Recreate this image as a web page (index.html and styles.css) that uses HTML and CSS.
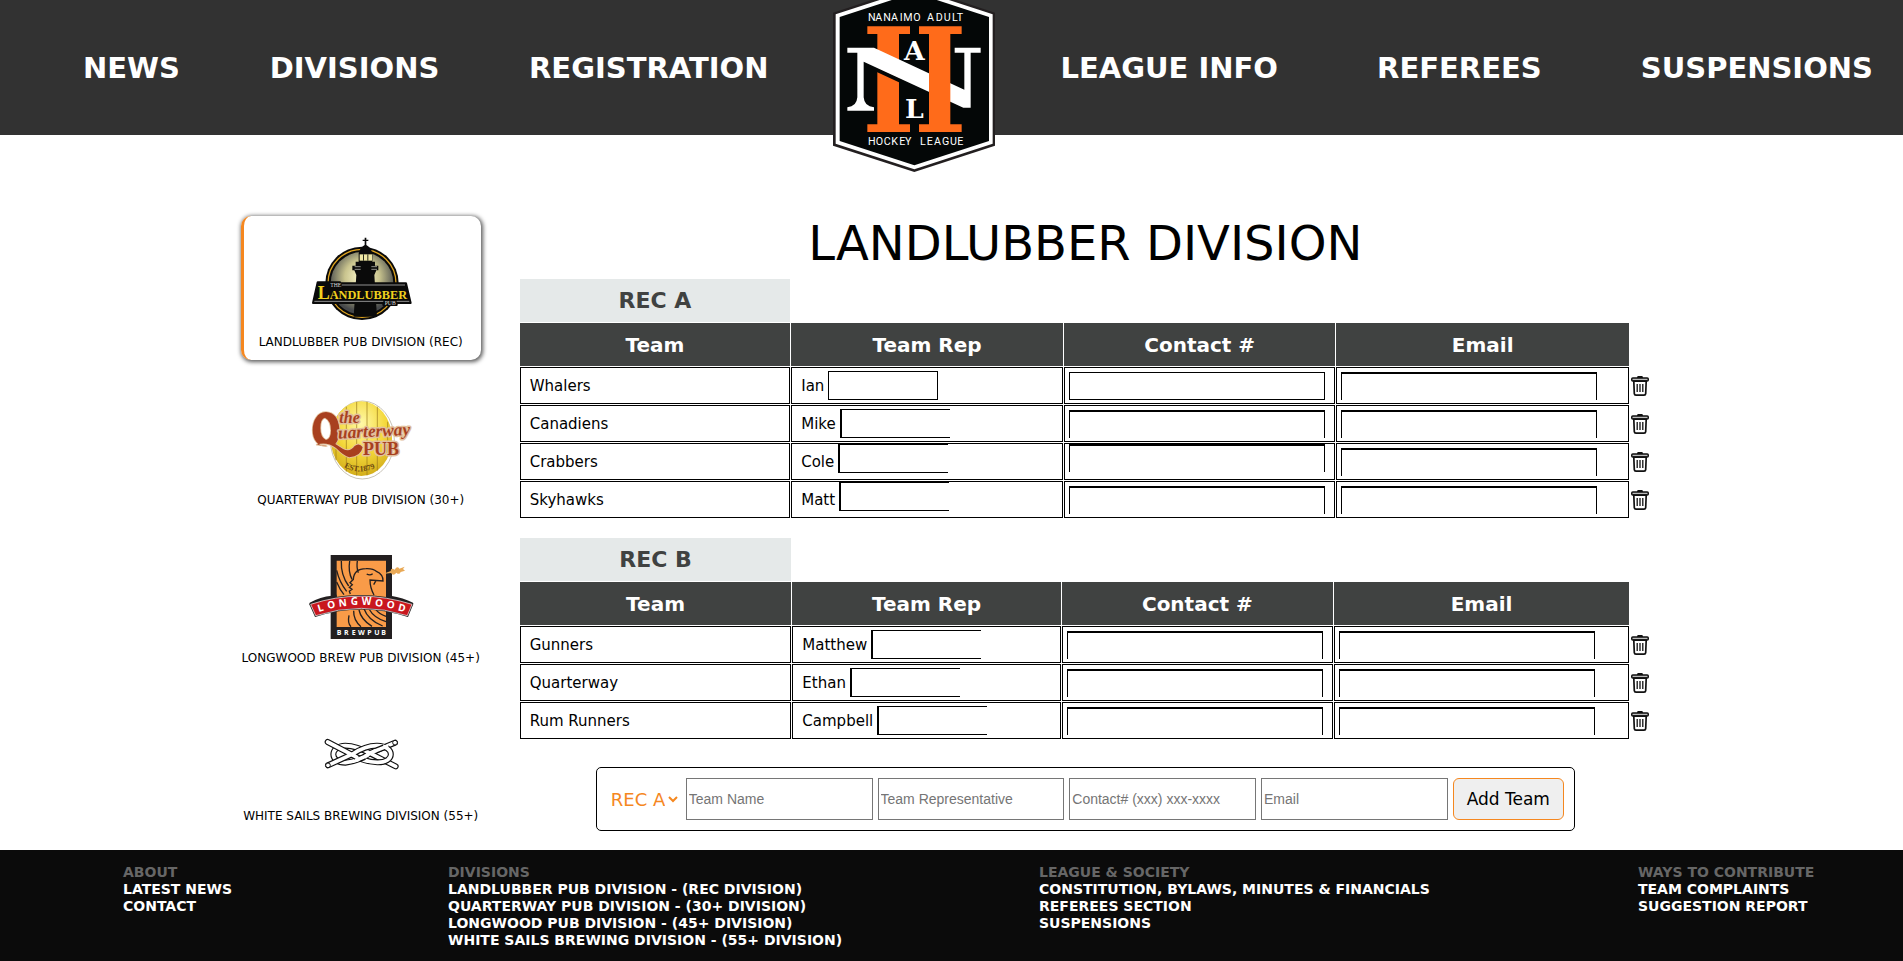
FILE: index.html
```html
<!DOCTYPE html>
<html lang="en">
<head>
<meta charset="utf-8">
<title>Landlubber Division - Nanaimo Adult Hockey League</title>
<link rel="stylesheet" href="styles.css">
</head>
<body>
<header class="site-header">
  <nav class="nav-group">
    <a href="#">NEWS</a>
    <a href="#">DIVISIONS</a>
    <a href="#">REGISTRATION</a>
  </nav>
  <a class="brand" href="#" aria-label="Nanaimo Adult Hockey League">
    <svg viewBox="99 0 486 516" aria-hidden="true">
      <path fill="#231f20" d="M99 38 343 -42 585 38V437L343 516 99 437Z"/>
      <path fill="#fff" d="M107 43 343 -34 578 43V431L343 508 107 431Z"/>
      <path fill="#040707" d="M119 51 343 -22 567 51V423L343 496 119 423Z"/>
      <path fill="#ff6b1a" d="M202 79H330V102H297V373H330V396H202V373H232V102H202Z"/>
      <path fill="#040707" d="M228 200 300 234V248L232 217H228Z"/>
      <path fill="#fff" d="M142 143H222L493 269V158H464V143H542V158H512V323H490L191 185V292Q193 320 222 322V332H142V322Q170 320 172 292V158H142Z"/>
      <path fill="#ff6b1a" d="M357 79H485V102H451V373H485V396H357V373H387V102H357Z"/>
      <g class="brand-small">
        <text y="62" x="204 226 250 273 299 310 340 362 381 407 431 456 470">NANAIMO ADULT</text>
        <text y="436" x="204 227 251 274 298 315 340 360 380 402 426 450 472">HOCKEY LEAGUE</text>
      </g>
      <g class="brand-slab">
        <text x="343" y="181">A</text>
        <text x="343" y="353">L</text>
      </g>
    </svg>
  </a>
  <nav class="nav-group">
    <a href="#">LEAGUE INFO</a>
    <a href="#">REFEREES</a>
    <a href="#">SUSPENSIONS</a>
  </nav>
</header>

<div class="page">
  <aside class="divisions">
    <a class="division active" href="#">
      <svg viewBox="234 84 318 300" aria-hidden="true">
        <defs>
          <radialGradient id="glow" cx=".5" cy=".4" r=".55"><stop offset="0" stop-color="#fffbd0"/><stop offset=".5" stop-color="#c9c48e"/><stop offset="1" stop-color="#46484a"/></radialGradient>
        </defs>
        <circle cx="396" cy="250" r="110" fill="#0a0a0a"/>
        <circle cx="396" cy="250" r="102" fill="none" stroke="#e0a520" stroke-width="4"/>
        <circle cx="396" cy="250" r="94" fill="url(#glow)"/>
        <path fill="#0a0a0a" d="M404 113h5v6h6v4h-6v12q14 8 18 24v26h8v12h10v14h-6l-6 14 8 125h-70l8-125-6-14h-6v-14h10v-12h9v-26q4-16 18-24v-12h-6v-4h6Z"/>
        <path fill="#efe7a4" d="M389 163h37v19h-37Z"/>
        <path fill="#2b2a1c" d="M399 163h3v19h-3ZM412 163h3v19h-3Z"/>
        <path fill="none" stroke="#d8d8cf" stroke-width="2" d="M374 200h18M374 208h18M424 200h17M424 208h17"/>
        <path fill="#0a0a0a" stroke="#0a0a0a" stroke-width="6" stroke-linejoin="round" d="M263 247H330V250H528L542 309H500V315H460V309H249Z"/>
        <path fill="none" stroke="#d6d6d6" stroke-width="2" d="M335 255H525M253 304H460M500 304H538"/>
        <g fill="#f0d11e" font-family="Liberation Serif, serif" font-weight="bold"><text x="263" y="297" font-size="54">L</text><text x="299" y="297" font-size="37">ANDLUBBER</text></g>
        <g fill="#ddd" font-family="Liberation Serif, serif"><text x="301" y="262" font-size="17">THE</text><text x="464" y="316" font-size="17">PUB</text></g>
      </svg>
      <span>LANDLUBBER PUB DIVISION (REC)</span>
    </a>
    <a class="division" href="#">
      <svg viewBox="234 558 318 300" aria-hidden="true">
        <defs>
          <radialGradient id="sun" cx=".5" cy=".3" r=".8"><stop offset="0" stop-color="#fff9a8"/><stop offset=".5" stop-color="#f4d83a"/><stop offset="1" stop-color="#c9a010"/></radialGradient>
        </defs>
        <ellipse cx="397" cy="720" rx="96" ry="117" fill="#fff" stroke="#aaa391" stroke-width="2"/>
        <ellipse cx="394" cy="716" rx="92" ry="112" fill="url(#sun)"/>
        <path fill="none" stroke="#97761a" stroke-width="2" d="M318 660V780M349 620V815M380 606V827M411 606V826M442 620V812M473 665V770"/>
        <g font-family="Liberation Serif, serif" font-weight="bold" fill="#a8401f" stroke="#e2c09c" stroke-width="9" stroke-linejoin="round" paint-order="stroke">
          <path d="M288 636C262 636 248 663 248 690C248 722 266 740 290 738L260 734Q290 724 318 744Q342 768 358 772Q392 770 398 742Q388 727 374 738Q360 758 338 746L316 732Q330 714 328 686Q324 638 288 636ZM285 653Q303 662 303 692Q303 716 288 720Q271 712 271 684Q271 656 285 653Z" fill-rule="evenodd" stroke-width="5"/>
          <text x="328" y="668" font-size="48" font-style="italic">the</text>
          <text x="325" y="716" font-size="52" font-style="italic" transform="rotate(-3 325 716)">uarterway</text>
          <text x="399" y="765" font-size="54">PUB</text>
        </g>
        <path id="estArc" fill="none" d="M342 801Q392 831 452 795"/>
        <text font-family="Liberation Serif, serif" font-weight="bold" font-size="24" fill="#6b4712"><textPath href="#estArc">EST.1879</textPath></text>
      </svg>
      <span>QUARTERWAY PUB DIVISION (30+)</span>
    </a>
    <a class="division" href="#">
      <svg viewBox="234 42 318 300" aria-hidden="true">
        <path fill="#231f20" d="M302 75H486V327H302Z"/>
        <path fill="#f99b48" d="M320 92H468V291H320Z"/>
        <g fill="none" stroke="#231f20" stroke-width="4">
          <path d="M382 93Q379 113 385 128M359 93Q354 125 366 148M334 93Q332 135 356 168M320 121Q328 156 350 184M320 156Q330 180 342 194"/>
          <path d="M361 192 358 184 366 178 358 172 367 164 360 158 370 148Q372 116 408 116Q430 115 439 124Q460 133 459 153L420 150Q420 173 432 195M410 132Q420 138 428 131M438 152 431 164"/>
          <path d="M357 256Q352 280 363 290M371 242Q370 270 393 290M387 240Q393 269 426 289M402 236Q414 270 458 288M417 237Q432 264 468 275M438 239Q447 252 468 259"/>
        </g>
        <path fill="#e9a956" d="M459 132 482 123Q482 112 494 119Q502 106 508 116L524 110 519 117 525 122 512 126Q508 136 499 128Q490 140 483 129Z"/>
        <path fill="#231f20" d="M239 218Q271 200 306 197V191L320 194V207L239 226ZM549 218Q520 203 482 197V191L470 194V207L549 226Z"/>
        <path fill="#c9171e" stroke="#231f20" stroke-width="7" d="M242 223Q390 174 546 223L532 257Q394 213 257 257Z"/>
        <path fill="#c9171e" stroke="#fff" stroke-width="2" d="M242 223Q390 174 546 223L532 257Q394 213 257 257Z"/>
        <g class="longwood">
          <text transform="rotate(-17 272 235)" x="272" y="244">L</text><text transform="rotate(-12 304 227)" x="304" y="235">O</text><text transform="rotate(-6 338 220)" x="338" y="229">N</text><text x="373" y="226">G</text><text x="410" y="226">W</text><text transform="rotate(6 447 220)" x="447" y="229">O</text><text transform="rotate(10 482 226)" x="482" y="235">O</text><text transform="rotate(15 516 234)" x="516" y="244">D</text>
        </g>
        <text class="brewpub" y="314" x="320 342 365 384 412 433 454">BREWPUB</text>
      </svg>
      <span>LONGWOOD BREW PUB DIVISION (45+)</span>
    </a>
    <a class="division" href="#">
      <svg viewBox="234 516 318 300" aria-hidden="true">
        <g fill="none" stroke-linecap="round">
          <path class="rope-edge" d="M495 638 423 668Q385 694 346 698C298 698 298 648 346 647Q380 647 424 672L497 709"/>
          <path class="rope-core" d="M495 638 423 668Q385 694 346 698C298 698 298 648 346 647Q380 647 424 672L497 709"/>
          <path class="rope-edge" d="M293 636 364 673Q402 696 442 697C496 698 496 648 442 647Q408 646 368 672L294 706"/>
          <path class="rope-core" d="M293 636 364 673Q402 696 442 697C496 698 496 648 442 647Q408 646 368 672L294 706"/>
          <path class="rope-edge flat" d="M440 661 462 652M404 681 388 688"/>
          <path class="rope-core" d="M432 664 470 649M411 677 380 690"/>
        </g>
        <g fill="#fff" stroke="#111" stroke-width="3"><circle cx="495" cy="638" r="7"/><circle cx="294" cy="706" r="7"/></g>
      </svg>
      <span>WHITE SAILS BREWING DIVISION (55+)</span>
    </a>
  </aside>

  <main class="content">
    <h1>LANDLUBBER DIVISION</h1>

    <table class="teams rec-a">
      <colgroup><col class="c-team"><col class="c-rep"><col class="c-contact"><col><col class="c-del"></colgroup>
      <thead>
        <tr><th class="group">REC A</th></tr>
        <tr><th>Team</th><th>Team Rep</th><th>Contact #</th><th>Email</th></tr>
      </thead>
      <tbody>
        <tr><td>Whalers</td><td><div class="cell">Ian <span class="name-box closed"></span></div></td><td><div class="cell"><span class="data-box closed"></span></div></td><td><div class="cell"><span class="data-box"></span></div></td><td class="del"><button type="button" aria-label="Delete Whalers"><svg viewBox="0 0 18 20"><use href="#trash"/></svg></button></td></tr>
        <tr><td>Canadiens</td><td><div class="cell">Mike <span class="name-box"></span></div></td><td><div class="cell"><span class="data-box"></span></div></td><td><div class="cell"><span class="data-box"></span></div></td><td class="del"><button type="button" aria-label="Delete Canadiens"><svg viewBox="0 0 18 20"><use href="#trash"/></svg></button></td></tr>
        <tr><td>Crabbers</td><td><div class="cell">Cole <span class="name-box high"></span></div></td><td><div class="cell"><span class="data-box high"></span></div></td><td><div class="cell"><span class="data-box"></span></div></td><td class="del"><button type="button" aria-label="Delete Crabbers"><svg viewBox="0 0 18 20"><use href="#trash"/></svg></button></td></tr>
        <tr><td>Skyhawks</td><td><div class="cell">Matt <span class="name-box high"></span></div></td><td><div class="cell"><span class="data-box"></span></div></td><td><div class="cell"><span class="data-box"></span></div></td><td class="del"><button type="button" aria-label="Delete Skyhawks"><svg viewBox="0 0 18 20"><use href="#trash"/></svg></button></td></tr>
      </tbody>
    </table>

    <table class="teams rec-b">
      <colgroup><col class="c-team"><col class="c-rep"><col class="c-contact"><col><col class="c-del"></colgroup>
      <thead>
        <tr><th class="group">REC B</th></tr>
        <tr><th>Team</th><th>Team Rep</th><th>Contact #</th><th>Email</th></tr>
      </thead>
      <tbody>
        <tr><td>Gunners</td><td><div class="cell">Matthew <span class="name-box"></span></div></td><td><div class="cell"><span class="data-box"></span></div></td><td><div class="cell"><span class="data-box"></span></div></td><td class="del"><button type="button" aria-label="Delete Gunners"><svg viewBox="0 0 18 20"><use href="#trash"/></svg></button></td></tr>
        <tr><td>Quarterway</td><td><div class="cell">Ethan <span class="name-box"></span></div></td><td><div class="cell"><span class="data-box"></span></div></td><td><div class="cell"><span class="data-box"></span></div></td><td class="del"><button type="button" aria-label="Delete Quarterway"><svg viewBox="0 0 18 20"><use href="#trash"/></svg></button></td></tr>
        <tr><td>Rum Runners</td><td><div class="cell">Campbell <span class="name-box"></span></div></td><td><div class="cell"><span class="data-box"></span></div></td><td><div class="cell"><span class="data-box"></span></div></td><td class="del"><button type="button" aria-label="Delete Rum Runners"><svg viewBox="0 0 18 20"><use href="#trash"/></svg></button></td></tr>
      </tbody>
    </table>

    <form class="add-team">
      <select aria-label="Division"><option>REC A</option><option>REC B</option></select>
      <input type="text" aria-label="Team Name" placeholder="Team Name">
      <input type="text" aria-label="Team Representative" placeholder="Team Representative">
      <input type="tel" aria-label="Contact number" placeholder="Contact# (xxx) xxx-xxxx">
      <input type="email" aria-label="Email" placeholder="Email">
      <button type="button">Add Team</button>
    </form>
  </main>
</div>

<footer class="site-footer">
  <section>
    <h2>ABOUT</h2>
    <a href="#">LATEST NEWS</a>
    <a href="#">CONTACT</a>
  </section>
  <section>
    <h2>DIVISIONS</h2>
    <a href="#">LANDLUBBER PUB DIVISION - (REC DIVISION)</a>
    <a href="#">QUARTERWAY PUB DIVISION - (30+ DIVISION)</a>
    <a href="#">LONGWOOD PUB DIVISION - (45+ DIVISION)</a>
    <a href="#">WHITE SAILS BREWING DIVISION - (55+ DIVISION)</a>
  </section>
  <section>
    <h2>LEAGUE &amp; SOCIETY</h2>
    <a href="#">CONSTITUTION, BYLAWS, MINUTES &amp; FINANCIALS</a>
    <a href="#">REFEREES SECTION</a>
    <a href="#">SUSPENSIONS</a>
  </section>
  <section>
    <h2>WAYS TO CONTRIBUTE</h2>
    <a href="#">TEAM COMPLAINTS</a>
    <a href="#">SUGGESTION REPORT</a>
  </section>
</footer>

<svg class="sprite" aria-hidden="true">
  <symbol id="trash" viewBox="0 0 18 20">
    <path fill="#111" d="M7 0h4q1 0 1 2H6q0-2 1-2Z"/>
    <rect x=".75" y="2" width="16.5" height="3" rx="1" fill="#bbb" stroke="#111" stroke-width="1.5"/>
    <path fill="#fff" stroke="#111" stroke-width="1.7" d="M2.8 5.2 3.3 17.6Q3.4 19.1 5 19.1H13Q14.6 19.1 14.7 17.6L15.2 5.2Z"/>
    <path fill="none" stroke="#111" stroke-width="1.3" d="M6.2 8V16M9 8V16M11.8 8V16"/>
  </symbol>
</svg>
</body>
</html>
```

FILE: styles.css
```css
* { box-sizing: border-box; }

body {
  margin: 0;
  min-height: 100vh;
  display: flex;
  flex-direction: column;
  background: #fff;
  color: #000;
  font-family: "DejaVu Sans", sans-serif;
  font-size: 15px;
}

a { color: inherit; text-decoration: none; }

.sprite { position: absolute; width: 0; height: 0; }

/* Header */
.site-header {
  display: grid;
  grid-template-columns: minmax(0, 685fr) 162px minmax(0, 812fr);
  column-gap: 65px;
  align-items: center;
  height: 135px;
  padding: 0 30px 0 83px;
  background: #323232;
  color: #fff;
}

.nav-group {
  display: flex;
  justify-content: space-between;
  font-size: 29px;
  line-height: 34px;
  font-weight: bold;
  white-space: nowrap;
}

.brand { position: relative; align-self: stretch; }

.brand svg {
  position: absolute;
  top: 0;
  left: 0;
  width: 162px;
  height: 172px;
}

.brand-small {
  fill: #fff;
  font-family: Roboto, sans-serif;
  font-size: 32px;
}

.brand-slab {
  fill: #fff;
  font-family: "DejaVu Serif", serif;
  font-size: 80px;
  font-weight: bold;
  text-anchor: middle;
}

/* Page body */
.page {
  display: flex;
  flex: 1;
  gap: 38px;
  padding: 81px 13.2% 16px 12.65%;
}

.divisions {
  display: flex;
  flex: none;
  flex-direction: column;
  gap: 14px;
  width: 240px;
}

.division {
  display: flex;
  flex-direction: column;
  align-items: center;
  height: 144px;
  padding-top: 12px;
  border-radius: 10px;
  font-size: 12px;
  line-height: 28px;
  white-space: nowrap;
}

.division svg { width: 106px; height: 100px; }

.division.active {
  padding-right: 3px;
  border-left: 3px solid #f5871f;
  box-shadow: 1px 1px 4px 1px rgba(0, 0, 0, 0.65);
}

.longwood {
  fill: #fff;
  font-family: "Open Sans", sans-serif;
  font-size: 30px;
  font-weight: bold;
  text-anchor: middle;
}

.brewpub {
  fill: #fff;
  font-family: "Open Sans", sans-serif;
  font-size: 21px;
  font-weight: bold;
}

.rope-edge { stroke: #111; stroke-width: 18; }
.rope-core { stroke: #fff; stroke-width: 11; }
.flat { stroke-linecap: butt; }

.content { flex: 1; min-width: 0; }

h1 {
  margin: 0 0 8px;
  font-size: 48px;
  line-height: 54px;
  font-weight: normal;
  text-align: center;
}

/* Team tables */
.teams {
  width: 100%;
  table-layout: fixed;
  border-collapse: separate;
  border-spacing: 1px;
}

.rec-a .c-team { width: 24%; }
.rec-a .c-rep { width: 24.1%; }
.rec-a .c-contact { width: 24.1%; }
.rec-b .c-team { width: 24.1%; }
.rec-b .c-rep { width: 23.8%; }
.rec-b .c-contact { width: 24.1%; }
.c-del { width: 21px; }
.rec-b { margin-top: 18px; }

.teams th {
  height: 43px;
  padding: 0;
  background: #404241;
  color: #fff;
  font-size: 20px;
}

.teams .group {
  background: #e5e9e9;
  color: #404241;
  font-size: 22px;
}

.teams td {
  height: 37px;
  padding: 0 0 0 9px;
  border: 1px solid #000;
}

.teams td:nth-child(3),
.teams td:nth-child(4) { padding-left: 4px; }

.teams .del { padding: 0; border: 0; text-align: center; }

.del button {
  display: block;
  margin: 0 auto;
  padding: 0;
  border: 0;
  background: none;
}

.del svg { display: block; width: 18px; height: 20px; }

.cell {
  display: flex;
  align-items: center;
  gap: 4px;
  height: 35px;
}

.name-box {
  width: 110px;
  height: 29px;
  border: solid #000;
  border-width: 1px 0 1px 2px;
}

.data-box {
  width: 256px;
  height: 28px;
  border: solid #000;
  border-width: 2px 1px 0;
}

.closed { border-width: 1px; }
.high { align-self: flex-start; }

/* Add team form */
.add-team {
  display: flex;
  gap: 5px;
  width: 86.4%;
  margin: 27px auto 0;
  padding: 10px;
  border: 1px solid #000;
  border-radius: 5px;
}

.add-team select {
  width: 74px;
  border: 0;
  background: none;
  color: #f5871f;
  font: 18px "DejaVu Sans", sans-serif;
}

.add-team input {
  flex: 1;
  min-width: 0;
  height: 42px;
  padding: 1px 2px;
  border: 1px solid #767676;
  font: 14px "Liberation Sans", Arial, sans-serif;
}

.add-team input::placeholder { color: #757575; }

.add-team button {
  width: 111px;
  padding: 0;
  border: 1px solid #f5871f;
  border-radius: 6px;
  background: #efefef;
  color: #000;
  font: 17px "DejaVu Sans", sans-serif;
}

/* Footer */
.site-footer {
  display: grid;
  grid-template-columns: 325fr 591fr 599fr 177fr;
  padding: 14px 88px 12px 123px;
  background: #0b0b0b;
  color: #fff;
  font-size: 14px;
  line-height: 17px;
  font-weight: bold;
  white-space: nowrap;
}

.site-footer section { display: flex; flex-direction: column; min-width: 0; }

.site-footer h2 {
  margin: 0;
  color: #666;
  font-size: 14px;
}
```
